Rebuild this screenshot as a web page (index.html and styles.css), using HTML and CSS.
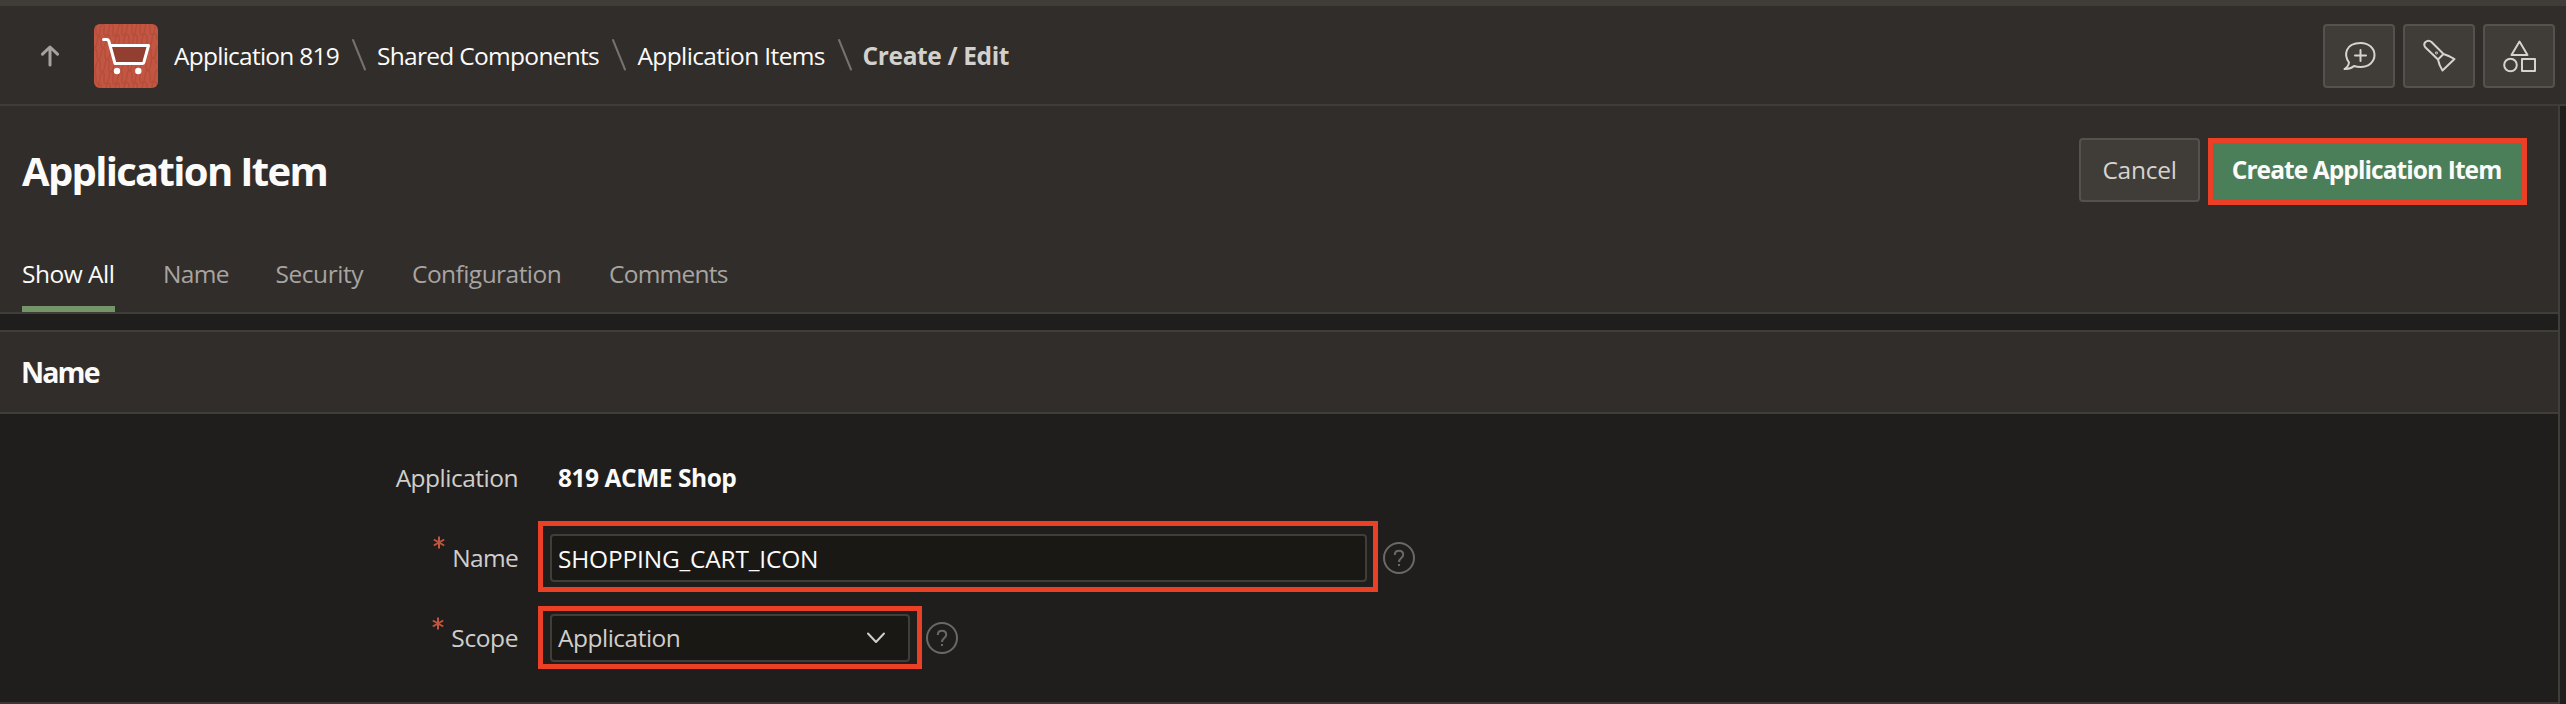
FILE: index.html
```html
<!DOCTYPE html>
<html lang="en">
<head>
<meta charset="utf-8">
<title>Application Item</title>
<link rel="stylesheet" href="styles.css">
</head>
<body>
<header class="header">
  <a class="up"><svg width="20" height="22" viewBox="0 0 20 22"><path d="M10 20V3M2.500 9.200L10 2l7.500 7.200" fill="none" stroke="#a5a29f" stroke-width="3" stroke-linecap="round" stroke-linejoin="round"/></svg></a>
  <svg class="logo" width="64" height="64" viewBox="0 0 64 64">
    <rect width="64" height="64" fill="#c25743"/>
    <g fill="none" stroke="#b24c3a" stroke-width="1.400" opacity=".8">
      <path id="wave" d="M-3 8c2-8 5-9 5-2s3 8 4 0 5-8 4 0 4 7 5-1 5-8 4 1 3 8 5-1 5-8 4 1 4 6 5-2 5-8 5 1 3 7 4-1 5-7 4 1 4 8 5-1 5-8 5 1 4 6 5-2 5-7 5 1"/>
      <use href="#wave" x="-3" y="12"/><use href="#wave" x="1" y="24"/><use href="#wave" x="-4" y="36"/><use href="#wave" x="0" y="48"/><use href="#wave" x="-3" y="60"/>
    </g>
    <path d="M16 21.500h38.500L49 39.500H21z" fill="#923f31"/>
    <path d="M9.500 15.500H13q1.400 0 1.800 1.500L21 39.500h27.500q1 0 1.400-1.300L54.500 21.500H16" fill="none" stroke="#fff" stroke-width="3" stroke-linecap="round" stroke-linejoin="round"/>
    <circle cx="23" cy="47" r="3.200" fill="#fff"/><circle cx="44.300" cy="47" r="3.200" fill="#fff"/>
  </svg>
  <nav class="crumbs">
    <a class="crumb c1">Application 819</a>
    <svg class="sep" width="16" height="34" viewBox="0 0 16 34"><path d="M2 2l12 29.500" stroke="#75726f" stroke-width="2" stroke-linecap="round"/></svg>
    <a class="crumb c2">Shared Components</a>
    <svg class="sep" width="16" height="34" viewBox="0 0 16 34"><path d="M2 2l12 29.500" stroke="#75726f" stroke-width="2" stroke-linecap="round"/></svg>
    <a class="crumb c3">Application Items</a>
    <svg class="sep" width="16" height="34" viewBox="0 0 16 34"><path d="M2 2l12 29.500" stroke="#75726f" stroke-width="2" stroke-linecap="round"/></svg>
    <span class="crumb c4">Create / Edit</span>
  </nav>
  <div class="tools">
    <button class="tool"><svg width="72" height="64" viewBox="0 0 72 64"><path d="M26 38.500C20.500 31 22.500 19 37.500 19C46 19 51.500 24.500 51.500 31S46 43 37.500 43Q34 43 31 42Q27 45.500 21.500 45Q25.500 42.500 26 38.500zM37.500 26v11M32 31.500h11"/></svg></button>
    <button class="tool"><svg width="72" height="64" viewBox="0 0 72 64"><path d="M35 35.500L22.500 23.500Q20 20.500 22.500 18Q25.500 15.500 28.500 18L40.500 30zM40.500 30Q45.500 31.500 51.500 35L39.500 46.500Q36 41 35 35.500"/><circle cx="33.500" cy="29" r=".4"/></svg></button>
    <button class="tool"><svg width="72" height="64" viewBox="0 0 72 64"><path d="M36.500 17.500L44.500 31h-16zM39 35h13v12H39z"/><circle cx="27.500" cy="41" r="6.300"/></svg></button>
  </div>
</header>
<main class="main">
  <section class="title-bar">
    <div class="title-row">
      <h1 class="title">Application Item</h1>
      <div class="actions">
        <button class="btn cancel">Cancel</button>
        <button class="btn create">Create Application Item</button>
      </div>
    </div>
    <nav class="tabs">
      <a class="tab active t1">Show All</a>
      <a class="tab t2">Name</a>
      <a class="tab t3">Security</a>
      <a class="tab t4">Configuration</a>
      <a class="tab t5">Comments</a>
    </nav>
  </section>
  <section class="region">
    <h2 class="region-head">Name</h2>
    <div class="form">
      <div class="row row-app">
        <label class="label l1">Application</label>
        <strong class="value">819 ACME Shop</strong>
      </div>
      <div class="row row-name">
        <label class="label l2"><svg class="req" width="12" height="13" viewBox="0 0 12 13"><path d="M6 .5v12M.8 3.500l10.400 6M11.200 3.500l-10.400 6"/></svg>Name</label>
        <div class="mark"><div class="field text">SHOPPING_CART_ICON</div></div>
        <svg class="help" width="32" height="32" viewBox="0 0 32 32"><circle cx="16" cy="16" r="15"/><path d="M11.800 13q0-4.200 4.200-4.200t4.200 3.900c0 3.300-4.200 3.300-4.200 7.300M16 22v2"/></svg>
      </div>
      <div class="row row-scope">
        <label class="label l3"><svg class="req" width="12" height="13" viewBox="0 0 12 13"><path d="M6 .5v12M.8 3.500l10.400 6M11.200 3.500l-10.400 6"/></svg>Scope</label>
        <div class="mark"><div class="field select"><span>Application</span><svg width="20" height="12" viewBox="0 0 20 12"><path d="M2 1.500l8 8.500 8-8.500" fill="none" stroke="#d0cecb" stroke-width="2" stroke-linecap="round" stroke-linejoin="round"/></svg></div></div>
        <svg class="help" width="32" height="32" viewBox="0 0 32 32"><circle cx="16" cy="16" r="15"/><path d="M11.800 13q0-4.200 4.200-4.200t4.200 3.900c0 3.300-4.200 3.300-4.200 7.300M16 22v2"/></svg>
      </div>
    </div>
  </section>
</main>
</body>
</html>
```
FILE: styles.css
```css
* { box-sizing: border-box; }
body {
  margin: 0;
  width: 2566px;
  height: 704px;
  overflow: hidden;
  background: #201e1c;
  color: #fcfbfa;
  font: 450 24.5px/34px "Open Sans", "Noto Sans", sans-serif;
  white-space: nowrap;
}
svg { display: block; flex: none; }
button { font: inherit; color: inherit; margin: 0; padding: 0; }

.header {
  display: flex;
  align-items: center;
  height: 106px;
  padding: 1px 11px 0 40px;
  background: #312d2a;
  border-top: 6px solid #403c38;
  border-bottom: 2px solid #403c38;
}
.up { width: 54px; }
.logo { border-radius: 6px; margin: 0 16px 0 0; }
.crumbs { display: flex; align-items: center; padding-top: 1px; }
.crumb { flex: none; }
.sep { margin-top: -3px; }
.c1 { width: 176.500px; letter-spacing: -.75px; }
.c2 { width: 244px; padding-left: 10.500px; letter-spacing: -.7px; }
.c3 { width: 210.500px; padding-left: 11px; letter-spacing: -.62px; }
.c4 { padding-left: 9.500px; letter-spacing: -.36px; font-weight: 700; color: #d3d1ce; }
.tools { display: flex; gap: 8px; margin: 0 0 0 auto; }
.tool {
  width: 72px;
  height: 64px;
  border: 2px solid #55514d;
  border-radius: 4px;
  background: #403c38;
}
.tool svg { margin: -2px; fill: none; stroke: #d6d3cf; stroke-width: 2; stroke-linejoin: round; stroke-linecap: round; }

.main {
  width: 2560px;
  height: 598px;
  border-right: 2px solid #403e38;
  border-bottom: 2px solid #3c3735;
}
.title-bar {
  display: flex;
  flex-direction: column;
  justify-content: space-between;
  height: 208px;
  padding: 32px 31px 0 22px;
  background: #312d2a;
  border-bottom: 2px solid #403e38;
}
.title-row { display: flex; justify-content: space-between; }
.title { margin: 0; font-size: 40px; line-height: 66px; font-weight: 700; letter-spacing: -1.680px; }
.actions { display: flex; gap: 8px; }
.btn { display: block; }
.cancel {
  width: 121px;
  height: 64px;
  border: 2px solid #55514d;
  border-radius: 4px;
  background: #403c38;
  color: #d6d3cf;
  letter-spacing: -.25px;
}
.create {
  width: 319px;
  height: 67px;
  padding: 0 2px 3px 0;
  border: 5px solid #eb4025;
  background: #4b7f5a;
  font-weight: 700;
  letter-spacing: -.92px;
}
.tabs { display: flex; height: 56px; }
.tab { flex: none; padding-top: 1px; color: #a7a4a1; }
.t1 { width: 93px; margin-right: 48px; letter-spacing: -.5px; }
.active { color: #fcfbfa; border-bottom: 6px solid #759468; }
.t2 { width: 112.500px; letter-spacing: -.7px; }
.t3 { width: 136.500px; letter-spacing: -.45px; }
.t4 { width: 197px; letter-spacing: -.55px; }
.t5 { letter-spacing: -.75px; }

.region { margin-top: 16px; }
.region-head {
  margin: 0;
  height: 84px;
  padding-left: 21px;
  background: #312d2a;
  border: solid #403e38;
  border-width: 2px 0;
  font-size: 28.500px;
  line-height: 81px;
  font-weight: 700;
  letter-spacing: -1.900px;
}
.form { display: flex; flex-direction: column; padding-top: 47px; }
.row { display: flex; align-items: center; }
.label { display: flex; justify-content: flex-end; width: 518px; margin-right: 20px; color: #d0cecb; }
.l1 { letter-spacing: -.5px; }
.l2 { letter-spacing: -.7px; }
.l3 { letter-spacing: -.4px; }
.value { padding-left: 20px; letter-spacing: -.46px; }
.row-app { height: 34px; }
.row-name { height: 71px; margin-top: 26px; }
.row-name .label, .row-name .help { margin-top: 3px; }
.row-scope { height: 63px; margin-top: 14px; }
.req { margin: -4px 7px 0 0; fill: none; stroke: #c2553f; stroke-width: 2; }
.row-name .req { margin-top: -5px; }
.mark { padding: 8px 6px 5px 7px; border: 5px solid #eb4025; }
.row-scope .mark { padding: 3px 7px 2px; }
.field {
  display: flex;
  align-items: center;
  height: 48px;
  border: 2px solid #403e38;
  border-radius: 4px;
  background: #191815;
}
.text { width: 817px; padding: 1px 0 0 6px; letter-spacing: -.2px; }
.select { width: 360px; padding: 0 22px 0 6px; justify-content: space-between; color: #d0cecb; letter-spacing: -.5px; }
.help { margin-left: 5px; fill: none; stroke: #6b6865; stroke-width: 2; }
.row-scope .help { margin-left: 4px; }
```
